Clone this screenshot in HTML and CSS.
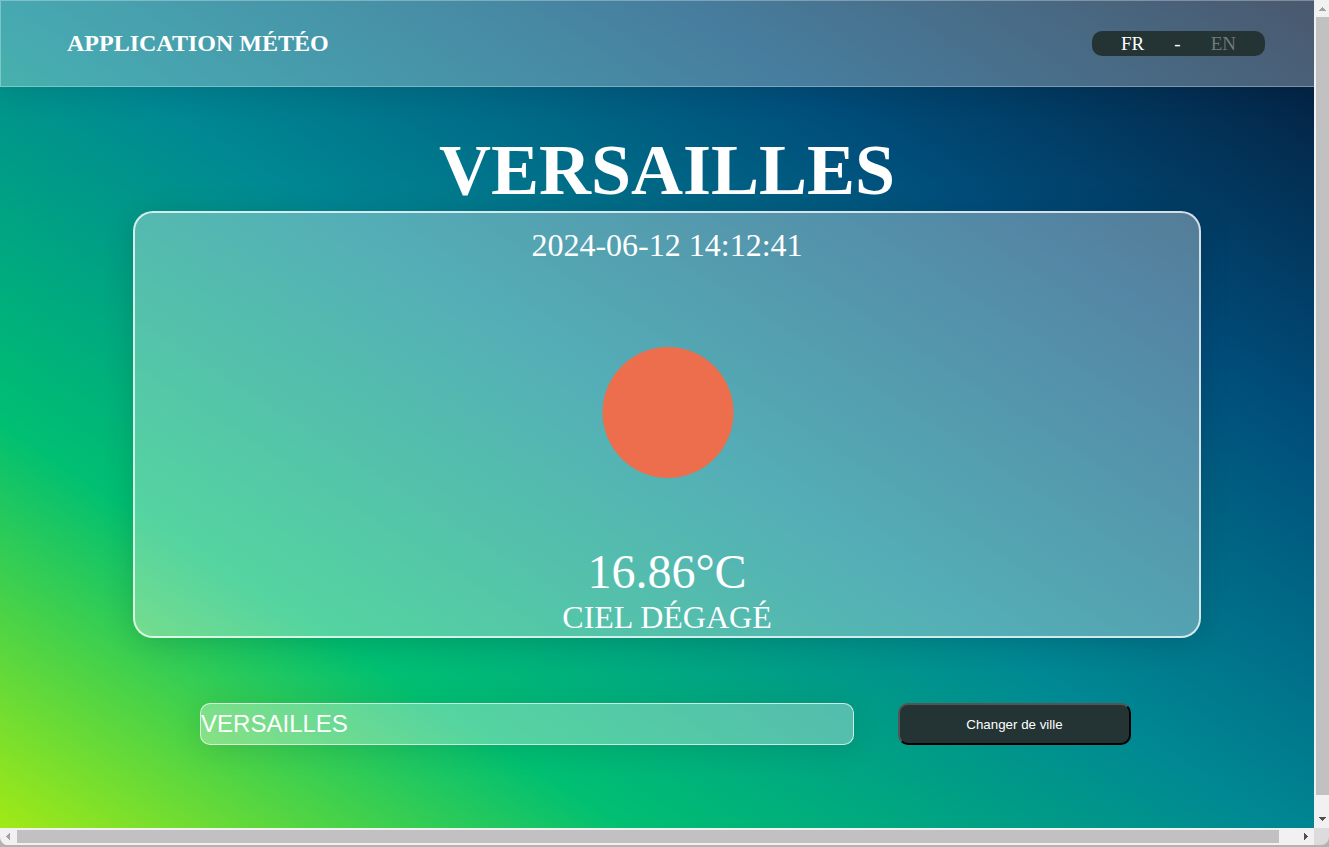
FILE: index.html
```html
<!DOCTYPE html>
<html lang="fr">
<head>
<meta charset="utf-8">
<title>Application Météo</title>
<link rel="stylesheet" href="styles.css">
</head>
<body>
<div class="window">
  <div class="viewport">
    <div class="page">
      <header class="header">
        <div class="brand">APPLICATION MÉTÉO</div>
        <nav class="languages" aria-label="Langue">
          <a class="language" href="#fr">FR</a>
          <span>-</span>
          <a class="language language-off" href="#en">EN</a>
        </nav>
      </header>
      <main class="main">
        <h1 class="city">VERSAILLES</h1>
        <section class="card">
          <time class="date" datetime="2024-06-12T14:12:41">2024-06-12 14:12:41</time>
          <svg class="sun" viewBox="0 0 280 280" role="img" aria-label="Soleil">
            <circle cx="141" cy="148.500" r="65.5" fill="#ec6e4c"/>
          </svg>
          <p class="temperature">16.86°C</p>
          <p class="sky">CIEL DÉGAGÉ</p>
        </section>
        <form class="search">
          <input class="search-input" type="text" value="VERSAILLES" aria-label="Ville">
          <button class="search-button" type="button">Changer de ville</button>
        </form>
      </main>
    </div>
  </div>
  <div class="scroll scroll-y">
    <svg class="arrow" viewBox="0 0 15 17"><path d="M4 11h7v-1h-1v-1h-1v-1h-1v-1h-1v1h-1v1h-1v1h-1z" fill="#a3a3a3"/></svg>
    <div class="thumb"></div>
    <svg class="arrow" viewBox="0 0 15 17"><path d="M4 6h7v1h-1v1h-1v1h-1v1h-1v-1h-1v-1h-1v-1h-1z" fill="#505050"/></svg>
  </div>
  <div class="scroll scroll-x">
    <svg class="arrow" viewBox="0 0 17 17"><path d="M10 5v7h-1v-1h-1v-1h-1v-1h-1v-1h1v-1h1v-1h1v-1z" fill="#a3a3a3"/></svg>
    <div class="thumb"></div>
    <svg class="arrow" viewBox="0 0 17 17"><path d="M7 5v7h1v-1h1v-1h1v-1h1v-1h-1v-1h-1v-1h-1v-1z" fill="#505050"/></svg>
  </div>
  <div class="corner"></div>
</div>
</body>
</html>
```
FILE: styles.css
```css
* {
  box-sizing: border-box;
}

body {
  margin: 0;
  background: #b3b3b3;
  color: #fff;
  font-family: "Liberation Serif", "Times New Roman", serif;
}

.window {
  display: grid;
  grid-template-columns: minmax(0, 1fr) 15px;
  grid-template-rows: minmax(0, 1fr) 17px;
  height: calc(100vh - 2px);
  border-radius: 0 0 8px 8px;
  overflow: hidden;
}

.viewport {
  overflow: hidden;
}

.page {
  width: calc(100% + 20px);
  min-height: calc(100% + 17px);
  background: linear-gradient(to left bottom, #051937, #004d7a, #008793, #00bf72, #a8eb12);
  background-size: calc(100% - 20px) 100%;
}

.header {
  display: flex;
  align-items: center;
  justify-content: space-between;
  height: 87px;
  padding: 0 68px 0 66px;
  border: 1px solid rgba(255, 255, 255, 0.3);
  background: rgba(255, 255, 255, 0.28);
  box-shadow: 0 4px 30px rgba(0, 0, 0, 0.1);
}

.brand {
  font-size: 24px;
  font-weight: bold;
}

.languages {
  display: flex;
  align-items: center;
  justify-content: space-around;
  width: 173px;
  height: 25px;
  padding: 0 14px;
  border-radius: 10px;
  background: #243333;
  font-size: 19px;
}

.language {
  color: #fff;
  text-decoration: none;
}

.language-off {
  color: #6f7a7a;
}

.main {
  display: flex;
  flex-direction: column;
  align-items: center;
  padding-top: 42px;
}

.city {
  margin: 0;
  font-size: 72px;
  line-height: 82px;
}

.card {
  display: flex;
  flex-direction: column;
  align-items: center;
  width: 80%;
  padding-top: 14px;
  border: 2px solid rgba(255, 255, 255, 0.75);
  border-radius: 20px;
  background: rgba(255, 255, 255, 0.33);
  box-shadow: 0 4px 30px rgba(0, 0, 0, 0.15);
}

.date,
.sky {
  margin: 0;
  font-size: 32px;
  line-height: 37px;
}

.sun {
  width: 280px;
  height: 280px;
}

.temperature {
  margin: 0;
  font-size: 48px;
  line-height: 55px;
}

.search {
  display: grid;
  grid-template-columns: 70% 25%;
  column-gap: 44px;
  width: 70%;
  height: 42px;
  margin-top: 65px;
}

.search-input {
  padding: 0;
  border: 1px solid rgba(255, 255, 255, 0.7);
  border-radius: 10px;
  background: rgba(255, 255, 255, 0.33);
  box-shadow: 0 4px 30px rgba(0, 0, 0, 0.1);
  color: #fff;
  font-family: "Liberation Sans", Arial, sans-serif;
  font-size: 24px;
}

.search-button {
  border: 2px outset #000;
  border-radius: 10px;
  background: #243333;
  color: #fff;
  font-family: "Liberation Sans", Arial, sans-serif;
}

.scroll {
  display: flex;
  background: #f1f1f1;
}

.scroll-y {
  flex-direction: column;
  border-left: 2px solid #f1f1f1;
}

.scroll-x {
  border: solid #f1f1f1;
  border-width: 2px 0;
}

.arrow {
  flex: none;
}

.scroll-y .arrow {
  width: 15px;
  height: 17px;
  margin-left: -1px;
}

.scroll-x .arrow {
  width: 17px;
  height: 17px;
  margin-top: -2px;
}

.thumb {
  background: #c1c1c1;
}

.scroll-y .thumb {
  flex: 0 1 98%;
  margin-bottom: 16px;
}

.scroll-x .thumb {
  flex: 1;
  margin-right: 18px;
}

.corner {
  background: #dcdcdc;
}
```
